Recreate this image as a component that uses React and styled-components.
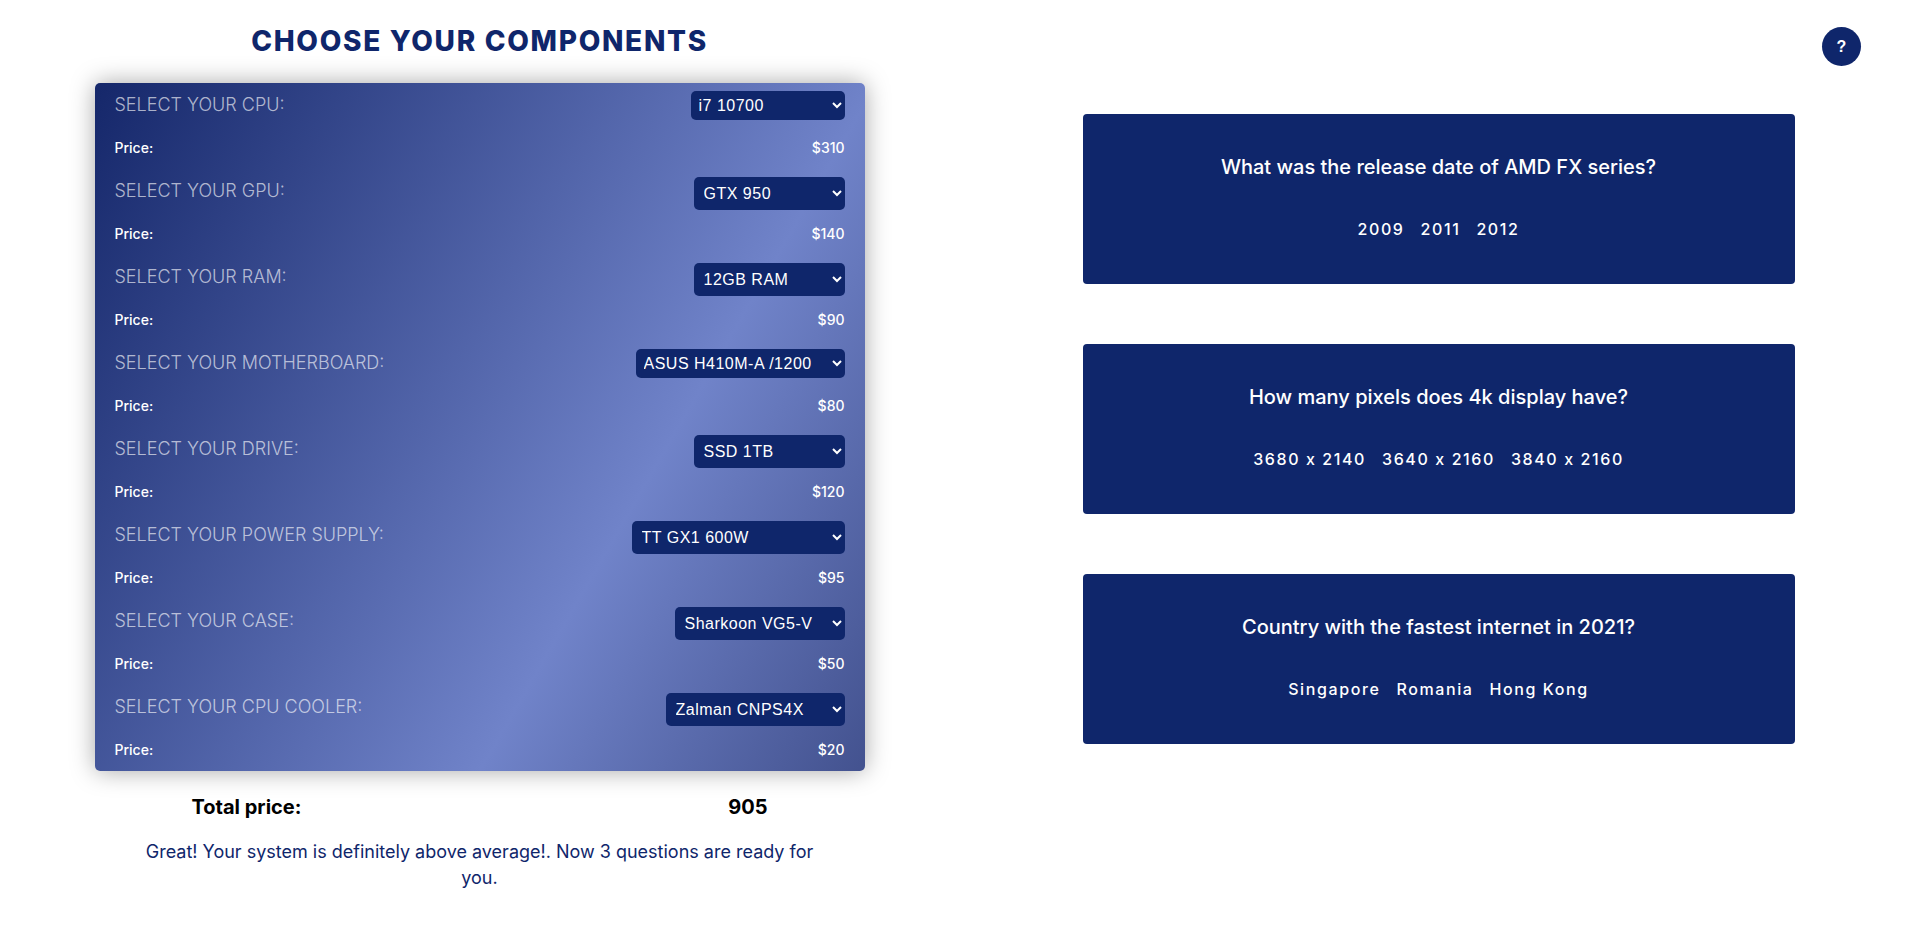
import React from "react";
import styled, { createGlobalStyle } from "styled-components";

const NAVY = "#0f266b";

const parts = [
  { label: "CPU", value: "i7 10700", price: 310, width: 154, height: 29, pad: 4 },
  { label: "GPU", value: "GTX 950", price: 140, width: 151, height: 33, pad: 6 },
  { label: "RAM", value: "12GB RAM", price: 90, width: 151, height: 33, pad: 6 },
  { label: "MOTHERBOARD", value: "ASUS H410M-A /1200", price: 80, width: 209, height: 29, pad: 4 },
  { label: "DRIVE", value: "SSD 1TB", price: 120, width: 151, height: 33, pad: 6 },
  { label: "POWER SUPPLY", value: "TT GX1 600W", price: 95, width: 213, height: 33, pad: 6 },
  { label: "CASE", value: "Sharkoon VG5-V", price: 50, width: 170, height: 33, pad: 6 },
  { label: "CPU COOLER", value: "Zalman CNPS4X", price: 20, width: 179, height: 33, pad: 6 },
];

const questions = [
  { text: "What was the release date of AMD FX series?", answers: ["2009", "2011", "2012"] },
  { text: "How many pixels does 4k display have?", answers: ["3680 x 2140", "3640 x 2160", "3840 x 2160"] },
  { text: "Country with the fastest internet in 2021?", answers: ["Singapore", "Romania", "Hong Kong"] },
];

const GlobalStyle = createGlobalStyle`
  * {
    box-sizing: border-box;
  }
  body {
    margin: 0;
    background: #fff;
    font-family: "Inter", "Liberation Sans", sans-serif;
  }
`;

const Page = styled.div`
  position: relative;
  display: grid;
  grid-template-columns: 959px 959px;
  min-height: 937px;
`;

const LeftColumn = styled.section`
  display: flex;
  flex-direction: column;
  align-items: center;
`;

const Title = styled.h1`
  margin: 22px 0 0;
  height: 61px;
  color: ${NAVY};
  font-size: 28px;
  line-height: 38px;
  font-weight: 800;
  letter-spacing: 1.7px;
`;

const Panel = styled.div`
  width: 770px;
  height: 688px;
  padding: 0 20px;
  border-radius: 5px;
  background: linear-gradient(120deg, #15276a 0%, #7083c9 67%, #43528f 100%);
  box-shadow: 0 0 25px rgba(0, 0, 0, 0.35);
`;

const Part = styled.div`
  height: 86px;
`;

const SelectRow = styled.div`
  display: flex;
  justify-content: space-between;
  height: 51px;
  padding-top: 8px;
`;

const PartLabel = styled.label`
  color: rgba(255, 255, 255, 0.65);
  font-size: 18px;
  line-height: 27px;
  font-weight: 300;
`;

const PartSelect = styled.select`
  width: ${(p) => p.$width}px;
  height: ${(p) => p.$height}px;
  padding: 0 ${(p) => p.$pad}px;
  border: none;
  border-radius: 5px;
  background-color: ${NAVY};
  color: #fff;
  font-family: "Liberation Sans", Arial, sans-serif;
  font-size: 16px;
  letter-spacing: 0.5px;
`;

const PriceRow = styled.div`
  display: flex;
  justify-content: space-between;
  color: #fff;
  font-size: 14px;
  line-height: 21px;
  font-weight: 500;
  padding-top: 3px;
`;

const TotalRow = styled.div`
  display: flex;
  justify-content: space-between;
  width: 770px;
  margin-top: 21px;
  padding: 0 97px;
  color: #000;
  font-size: 20px;
  line-height: 30px;
  font-weight: 700;
`;

const Message = styled.p`
  width: 680px;
  margin: 17px 0 0;
  color: ${NAVY};
  font-size: 18px;
  line-height: 26px;
  text-align: center;
`;

const RightColumn = styled.section`
  display: flex;
  flex-direction: column;
  align-items: center;
  gap: 60px;
  padding-top: 114px;
`;

const QuestionCard = styled.article`
  display: flex;
  flex-direction: column;
  align-items: center;
  width: 712px;
  height: 170px;
  padding-top: 38px;
  border-radius: 4px;
  background: ${NAVY};
  color: #fff;
`;

const QuestionText = styled.h2`
  margin: 0;
  font-size: 20px;
  line-height: 30px;
  font-weight: 500;
`;

const Answers = styled.div`
  display: flex;
  gap: 16px;
  margin-top: 35px;
`;

const Answer = styled.span`
  font-size: 16px;
  line-height: 24px;
  font-weight: 500;
  letter-spacing: 1.6px;
`;

const HelpButton = styled.button`
  position: absolute;
  top: 27px;
  left: 1822px;
  width: 39px;
  height: 39px;
  padding: 0;
  border: none;
  border-radius: 50%;
  background: ${NAVY};
  color: #fff;
  font-family: "Liberation Sans", Arial, sans-serif;
  font-size: 16px;
  font-weight: 700;
`;

const App = () => {
  return (
    <Page>
      <GlobalStyle />
      <LeftColumn>
        <Title>CHOOSE YOUR COMPONENTS</Title>
        <Panel>
          {parts.map((part) => (
            <Part key={part.label}>
              <SelectRow>
                <PartLabel>SELECT YOUR {part.label}:</PartLabel>
                <PartSelect
                  $width={part.width}
                  $height={part.height}
                  $pad={part.pad}
                  defaultValue={part.value}
                >
                  <option>{part.value}</option>
                </PartSelect>
              </SelectRow>
              <PriceRow>
                <span>Price:</span>
                <span>${part.price}</span>
              </PriceRow>
            </Part>
          ))}
        </Panel>
        <TotalRow>
          <span>Total price:</span>
          <span>905</span>
        </TotalRow>
        <Message>Great! Your system is definitely above average!. Now 3 questions are ready for you.</Message>
      </LeftColumn>
      <RightColumn>
        {questions.map((question) => (
          <QuestionCard key={question.text}>
            <QuestionText>{question.text}</QuestionText>
            <Answers>
              {question.answers.map((answer) => (
                <Answer key={answer}>{answer}</Answer>
              ))}
            </Answers>
          </QuestionCard>
        ))}
      </RightColumn>
      <HelpButton>?</HelpButton>
    </Page>
  );
};

export default App;
